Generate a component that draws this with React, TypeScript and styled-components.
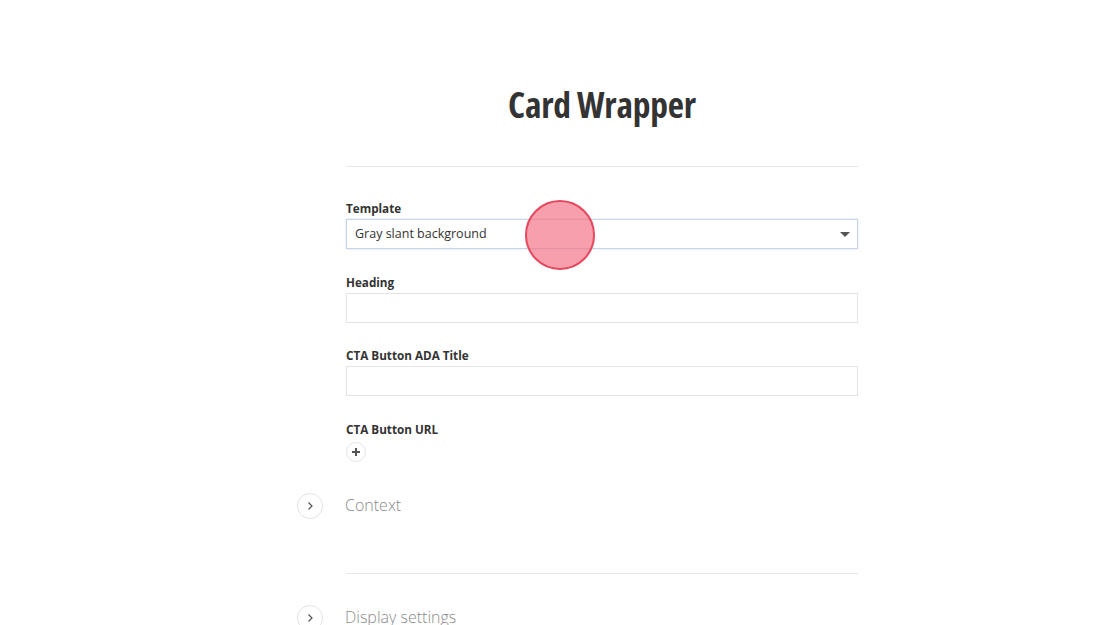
import React from "react";
import styled, { createGlobalStyle } from "styled-components";

const Global = createGlobalStyle`
  html, body { margin: 0; padding: 0; background: #fff; }
  body { font-family: "Open Sans", "Liberation Sans", sans-serif; color: #333; }
`;

const Page = styled.div`
  position: relative;
  width: 1120px;
  height: 625px;
  overflow: hidden;
  display: flex;
  justify-content: center;
`;

const Column = styled.div`
  width: 512px;
  margin-left: 84px;
  display: flex;
  flex-direction: column;
`;

const Title = styled.h1`
  margin: 81px 0 0;
  text-align: center;
  font-family: "Open Sans", sans-serif;
  font-stretch: 75%;
  font-weight: 700;
  font-size: 35.5px;
  line-height: 46px;
  color: #333;
  letter-spacing: -0.2px;
`;

const Divider = styled.hr<{ $top: number }>`
  border: 0;
  border-top: 1px solid #e8e8e8;
  margin: ${(p) => p.$top}px 0 0;
  height: 0;
`;

const Field = styled.div<{ $top: number }>`
  margin-top: ${(p) => p.$top}px;
  display: flex;
  flex-direction: column;
`;

const Label = styled.label`
  font-size: 11.7px;
  font-weight: 700;
  line-height: 16px;
  color: #333;
  padding-top: 1px;
  margin-bottom: 3px;
`;

const Input = styled.div<{ $focus?: boolean }>`
  height: 30px;
  box-sizing: border-box;
  border: 1px solid ${(p) => (p.$focus ? "#c7d6e6" : "#e3e3e3")};
  ${(p) => (p.$focus ? "box-shadow: 0 0 2px rgba(160,190,220,0.5);" : "")}
  background: #fff;
  display: flex;
  align-items: center;
  justify-content: space-between;
  padding: 0 8px 2px;
  font-size: 12.5px;
  color: #333;
`;

const Caret = styled.span`
  width: 0;
  height: 0;
  border-left: 5px solid transparent;
  border-right: 5px solid transparent;
  border-top: 5px solid #555;
  margin: 2px -1px 0 0;
`;

const PlusButton = styled.div`
  width: 20px;
  height: 20px;
  border-radius: 50%;
  border: 1px solid #e6e6e6;
  box-sizing: border-box;
  display: flex;
  align-items: center;
  justify-content: center;
  margin-top: 2px;
`;

const Section = styled.div<{ $top: number }>`
  margin-top: ${(p) => p.$top}px;
  margin-left: -49px;
  display: flex;
  align-items: center;
  gap: 22px;
`;

const Toggle = styled.div`
  width: 26px;
  height: 26px;
  border-radius: 50%;
  border: 1px solid #e3e3e3;
  box-sizing: border-box;
  display: flex;
  align-items: center;
  justify-content: center;
`;

const SectionTitle = styled.span`
  font-size: 16px;
  font-weight: 300;
  color: #8a8a8a;
  line-height: 22px;
  margin-top: -3px;
`;

const Touch = styled.div`
  position: absolute;
  left: 525px;
  top: 200px;
  width: 70px;
  height: 70px;
  box-sizing: border-box;
  border-radius: 50%;
  border: 2px solid #e5485f;
  background: rgba(243, 108, 128, 0.65);
`;

const Chevron = () => (
  <svg width="12" height="12" viewBox="0 0 12 12">
    <path d="M4.5 2.5 L8 6 L4.5 9.5" fill="none" stroke="#555" strokeWidth="1.2" />
  </svg>
);

export default function App() {
  return (
    <Page>
      <Global />
      <Column>
        <Title>Card Wrapper</Title>
        <Divider $top={39} />
        <Field $top={32}>
          <Label>Template</Label>
          <Input $focus>
            <span>Gray slant background</span>
            <Caret />
          </Input>
        </Field>
        <Field $top={24}>
          <Label>Heading</Label>
          <Input />
        </Field>
        <Field $top={23}>
          <Label>CTA Button ADA Title</Label>
          <Input />
        </Field>
        <Field $top={24}>
          <Label>CTA Button URL</Label>
          <PlusButton>
            <svg width="10" height="10" viewBox="0 0 10 10">
              <path d="M5 1 V9 M1 5 H9" stroke="#555" strokeWidth="2" />
            </svg>
          </PlusButton>
        </Field>
        <Section $top={31}>
          <Toggle>
            <Chevron />
          </Toggle>
          <SectionTitle>Context</SectionTitle>
        </Section>
        <Divider $top={54} />
        <Section $top={31}>
          <Toggle>
            <Chevron />
          </Toggle>
          <SectionTitle>Display settings</SectionTitle>
        </Section>
      </Column>
      <Touch />
    </Page>
  );
}
